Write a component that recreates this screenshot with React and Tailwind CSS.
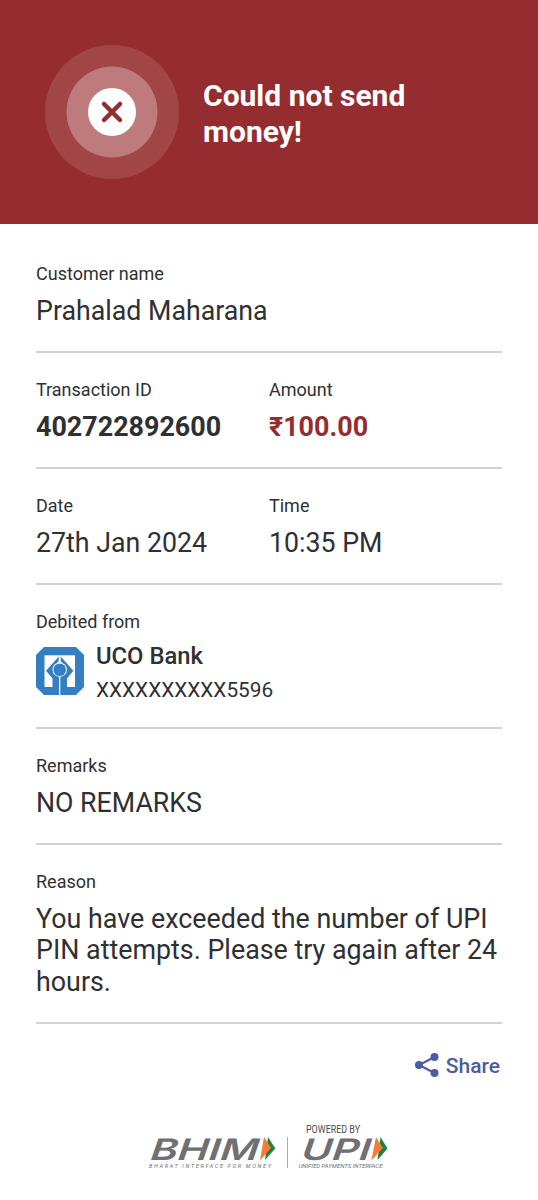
import React from "react";

function Field({ label, children, valueClass = "text-[26.75px] leading-8" }) {
  return (
    <div className="w-[233px] whitespace-nowrap">
      <div className="text-[18px] leading-6">{label}</div>
      <div className={"mt-[9px] " + valueClass}>{children}</div>
    </div>
  );
}

function Section({ children }) {
  return <section className="flex border-b-2 border-[#d2d2d2] pt-[25px] pb-6">{children}</section>;
}

function BankLogo() {
  return (
    <svg className="h-12 w-12 shrink-0" viewBox="0 0 48 48">
      <path d="M8 0H40L48 8V40L40 48H8L0 40V8Z" fill="#347fc1" />
      <path d="M8.500 8.300H39V40H8.500Z" fill="#fff" />
      <path d="M22.700 9.500L10 23.700L16.500 31.500V41H31V31.500L37.400 23.700L24.700 9.500V14L27 17H20.400L22.700 14Z" fill="#347fc1" />
      <circle cx="23.700" cy="22.700" r="7.200" fill="#fff" />
      <circle cx="23.700" cy="22.700" r="6.300" fill="#347fc1" />
      <path d="M23.700 29.500V48" stroke="#fff" strokeWidth="1.200" />
    </svg>
  );
}

function PaymentLogos() {
  return (
    <svg className="h-[52px] w-[242px] overflow-visible" viewBox="0 0 242 52" fontFamily="Roboto, sans-serif">
      <g fill="#6f7073">
        <text transform="translate(0 38.500) skewX(-19)" x="0" y="0" fontFamily="Inter, sans-serif" fontWeight="600" fontSize="29.500" textLength="108" lengthAdjust="spacingAndGlyphs">BHIM</text>
        <text x="1" y="47.300" fontStyle="italic" fontSize="5.600" textLength="122" lengthAdjust="spacing">BHARAT INTERFACE FOR MONEY</text>
        <text x="158" y="11.700" fontSize="10.200" fill="#4d4d4f" textLength="54" lengthAdjust="spacingAndGlyphs">POWERED BY</text>
        <text transform="translate(151 38.500) skewX(-19)" x="0" y="0" fontFamily="Inter, sans-serif" fontWeight="600" fontSize="29.500" textLength="69" lengthAdjust="spacingAndGlyphs">UPI</text>
        <text x="150.500" y="47.300" fontStyle="italic" fontSize="6" textLength="84" lengthAdjust="spacingAndGlyphs">UNIFIED PAYMENTS INTERFACE</text>
      </g>
      <path d="M139.500 16V47" stroke="#aaa" />
      <path d="M120 16L127.300 27.500L117 39Z" fill="#178349" />
      <path d="M116 16L123 27L112 39.500Z" fill="#f47c35" />
      <path d="M232.500 16L239.500 27.500L229.500 39Z" fill="#178349" />
      <path d="M228 16L234.800 27L223.400 39.500Z" fill="#f47c35" />
    </svg>
  );
}

export default function App() {
  return (
    <main className="h-[1200px] w-[538px] overflow-hidden bg-white font-['Roboto',sans-serif] text-[#2f3032]">
      <header className="flex h-56 items-center bg-[#952d30] pl-[45px] text-white">
        <svg className="h-[134px] w-[134px]" viewBox="0 0 134 134">
          <circle cx="67" cy="67" r="67" fill="#a24546" />
          <circle cx="67" cy="67" r="45.500" fill="#be7b7c" />
          <circle cx="67" cy="67" r="24" fill="#fff" />
          <path d="M59 59L75 75M75 59L59 75" stroke="#952d30" strokeWidth="4.500" strokeLinecap="round" />
        </svg>
        <h1 className="ml-6 mt-1 text-[30px] font-bold leading-[36px]">Could not send<br />money!</h1>
      </header>

      <div className="px-9 pt-[13px]">
        <Section><Field label="Customer name">Prahalad Maharana</Field></Section>
        <Section>
          <Field label="Transaction ID" valueClass="text-[26.9px] font-bold leading-8">402722892600</Field>
          <Field label="Amount" valueClass="text-[26.9px] font-bold leading-8 text-[#952d30]">₹100.00</Field>
        </Section>
        <Section>
          <Field label="Date">27th Jan 2024</Field>
          <Field label="Time">10:35 PM</Field>
        </Section>
        <Section>
          <div className="h-[93px]">
            <div className="text-[18px] leading-6">Debited from</div>
            <div className="mt-[7px] flex gap-3">
              <div className="pt-1.5"><BankLogo /></div>
              <div>
                <div className="text-[23.8px] font-medium leading-[30px]">UCO Bank</div>
                <div className="mt-1 text-[20.8px] leading-[30px]">XXXXXXXXXX5596</div>
              </div>
            </div>
          </div>
        </Section>
        <Section><Field label="Remarks">NO REMARKS</Field></Section>
        <Section>
          <Field label="Reason" valueClass="h-[94.500px] pt-[0.500px] text-[26.85px] leading-[31.500px]">
            You have exceeded the number of UPI<br />PIN attempts. Please try again after 24<br />hours.
          </Field>
        </Section>
        <div className="mt-[25px] flex h-8 items-center justify-end pr-0.5 text-[#4a5d9e]">
          <svg className="mr-[7px] h-6 w-6" viewBox="0 0 24 24" fill="currentColor">
            <path d="M19.500 4L4 12L19.500 20" fill="none" stroke="currentColor" strokeWidth="2" />
            <circle cx="19.500" cy="4" r="4" />
            <circle cx="4" cy="12" r="4" />
            <circle cx="19.500" cy="20" r="4" />
          </svg>
          <span className="pt-0.5 text-[21px] font-medium leading-8">Share</span>
        </div>
      </div>
      <footer className="mt-10 pl-[148px]"><PaymentLogos /></footer>
    </main>
  );
}
